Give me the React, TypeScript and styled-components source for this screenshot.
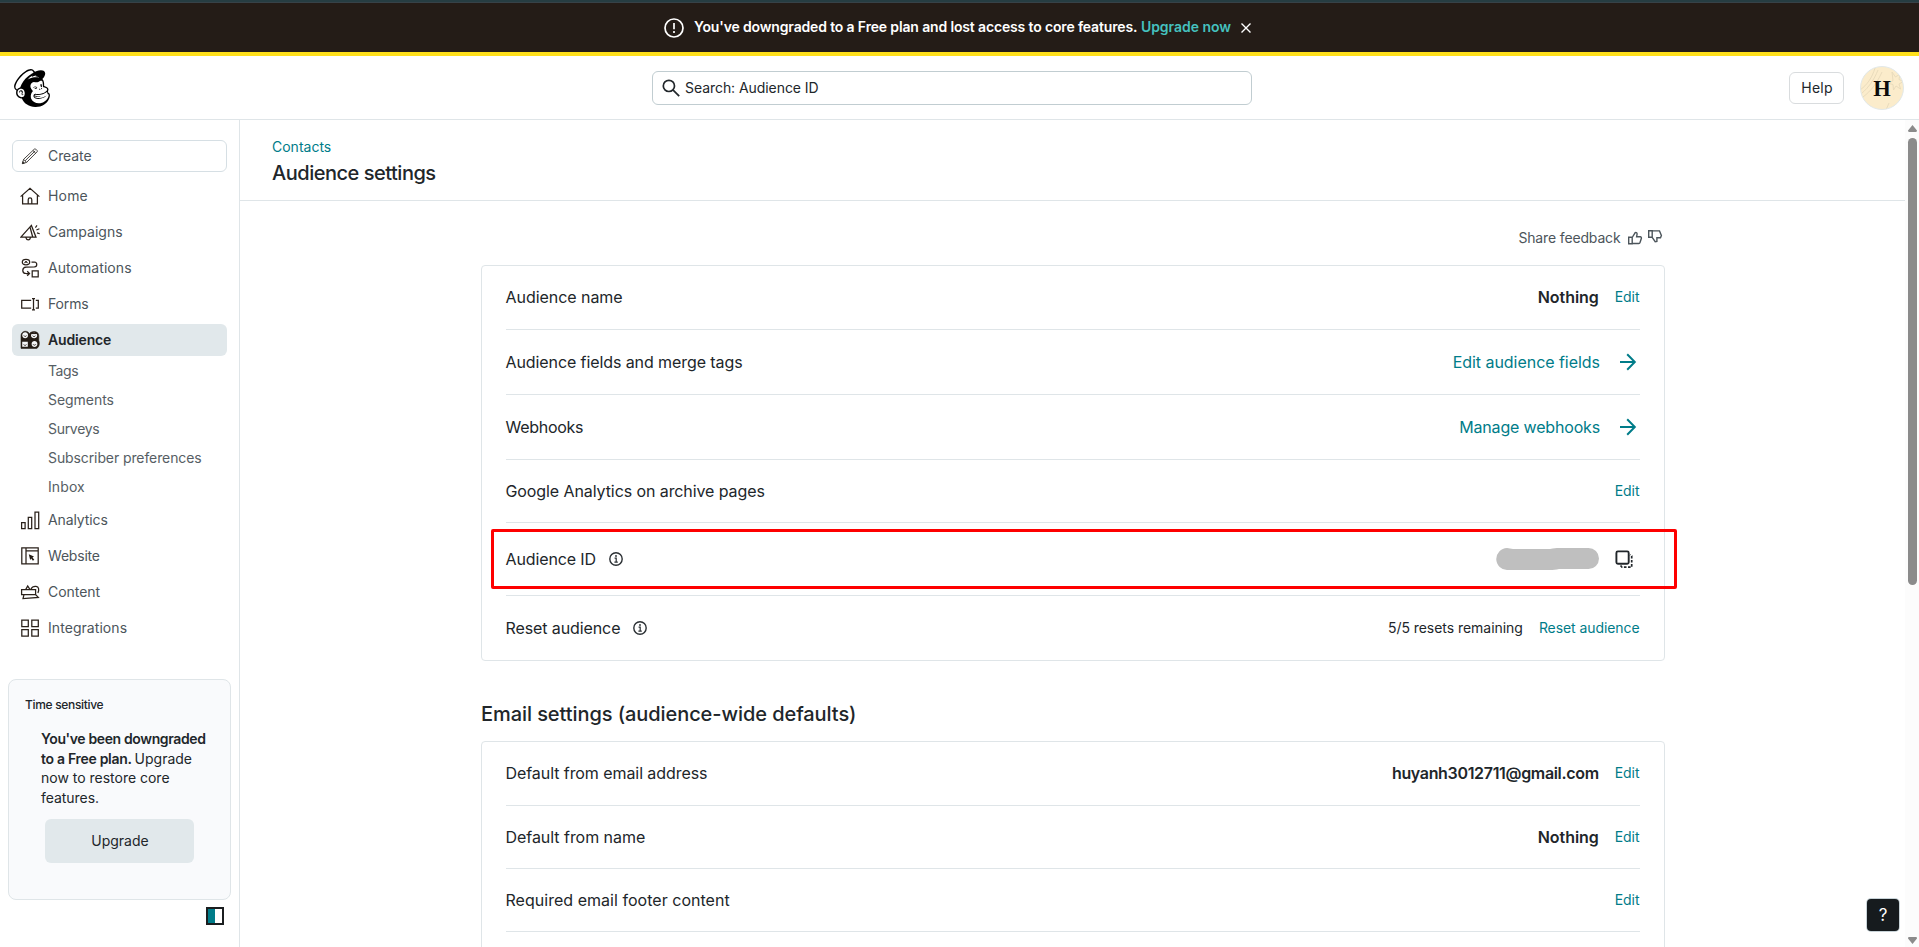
import React from "react";
import styled, { createGlobalStyle } from "styled-components";
import { SiMailchimp } from "react-icons/si";

const ink = "#21262a";
const muted = "#4c555b";
const teal = "#007c89";
const line = "#dfe5e8";

const GlobalStyle = createGlobalStyle`
  *, *::before, *::after { box-sizing: border-box; }
  html, body { margin: 0; height: 100%; overflow: hidden; }
  body {
    background: #fff;
    color: ${ink};
    font-family: Inter, "Liberation Sans", sans-serif;
    font-size: 14px;
  }
`;

const Page = styled.div`
  position: relative;
  display: flex;
  flex-direction: column;
  height: 947px;
  overflow: hidden;
`;

const Text = styled.span<{ $size?: number; $weight?: number; $ls?: number; $color?: string }>`
  font-size: ${(p) => p.$size ?? 14}px;
  font-weight: ${(p) => p.$weight ?? 400};
  letter-spacing: ${(p) => p.$ls ?? -0.05}px;
  color: ${(p) => p.$color ?? "inherit"};
  white-space: nowrap;
`;

const Link = styled(Text).attrs({ as: "a" })`
  color: ${teal};
`;

/* Top notice */
const TopStrip = styled.div`
  flex: none;
  height: 3px;
  background: #263d42;
  border-bottom: 1px solid #374248;
`;

const Notice = styled.div`
  flex: none;
  display: flex;
  align-items: center;
  height: 53px;
  padding-left: 664px;
  background: #241c17;
  border-bottom: 4px solid #ffe01b;
  color: #fff;

  > svg { flex: none; display: block; }
`;

const NoticeText = styled.div`
  display: flex;
  gap: 3.6px;
  margin: 0 10px 0 10px;
  padding-bottom: 2px;
`;

/* App header */
const Header = styled.header`
  flex: none;
  display: grid;
  grid-template-columns: 652px 600px 1fr;
  align-items: center;
  height: 64px;
  border-bottom: 1px solid ${line};
`;

const Brand = styled.div`
  display: flex;
  padding: 1px 0 0 13px;
  color: #000;
`;

const SearchBox = styled.div`
  display: flex;
  align-items: center;
  gap: 5px;
  height: 34px;
  padding-left: 9px;
  border: 1px solid #c1cdd1;
  border-radius: 6px;
`;

const Account = styled.div`
  display: flex;
  align-items: center;
  justify-content: flex-end;
  gap: 16px;
  padding-right: 15px;
`;

const HelpButton = styled.button`
  width: 55px;
  height: 32px;
  padding: 0 0 0 1px;
  border: 1px solid #d9dcde;
  border-radius: 6px;
  background: #fff;
  color: ${ink};
  font: inherit;
`;

/* Body */
const Body = styled.div`
  flex: 1;
  min-height: 0;
  display: grid;
  grid-template-columns: 240px 1fr 14px;
`;

const Sidebar = styled.aside`
  display: flex;
  flex-direction: column;
  border-right: 1px solid ${line};
  padding: 20px 8px 0 8px;
`;

const Nav = styled.nav`
  display: flex;
  flex-direction: column;
  gap: 4px;
  padding: 0 4px;
`;

const NavRow = styled.div<{ $active?: boolean; $outlined?: boolean }>`
  display: flex;
  align-items: center;
  gap: 8px;
  height: 32px;
  padding-left: ${(p) => (p.$outlined ? 7 : 8)}px;
  margin-bottom: ${(p) => (p.$outlined ? 4 : 0)}px;
  border: ${(p) => (p.$outlined ? `1px solid #d6dfe4` : "none")};
  border-radius: 6px;
  background: ${(p) => (p.$active ? "#e1e8eb" : "transparent")};
  color: ${(p) => (p.$active ? ink : muted)};

  svg { flex: none; }
  > span { padding-bottom: 1.5px; }
`;

const SubNav = styled.div`
  display: flex;
  flex-direction: column;
  margin: -4px 0 -1px;
  padding-left: 36px;
  color: #565e64;
`;

const SubItem = styled.div`
  display: flex;
  align-items: center;
  height: 29px;
  padding-bottom: 1px;
`;

const PlanCard = styled.section`
  display: flex;
  flex-direction: column;
  height: 221px;
  margin-top: 35px;
  padding: 15px 16px 0;
  border: 1px solid ${line};
  border-radius: 8px;
  background: #f9fafc;
`;

const PlanCopy = styled.p`
  display: flex;
  flex-direction: column;
  margin: 15px 0 0 16px;
  line-height: 19.5px;
`;

const CardTitle = styled.div`
  line-height: 18px;
`;

const UpgradeButton = styled.button`
  width: 149px;
  height: 44px;
  margin: 12px 0 0 20px;
  padding: 0 0 1px 1px;
  border: 0;
  border-radius: 6px;
  background: #e1e8eb;
  color: ${ink};
  font: inherit;
`;

const CollapseToggle = styled.div`
  align-self: flex-end;
  width: 18px;
  height: 18px;
  margin: 7px 7px 0 0;
  border: 2px solid #1b1e20;
  background: linear-gradient(to right, ${teal} 50%, #fff 50%);
`;

const Main = styled.main`
  display: flex;
  flex-direction: column;
  min-width: 0;
  overflow: hidden;
`;

const TitleBar = styled.div`
  flex: none;
  display: flex;
  flex-direction: column;
  height: 81px;
  padding: 17px 0 0 32px;
  border-bottom: 1px solid ${line};
  line-height: 20px;
`;

const PageTitle = styled.h1`
  margin: 2px 0 0;
  font-size: 20px;
  font-weight: 500;
  line-height: 28px;
  letter-spacing: -0.48px;
`;

const Content = styled.div`
  flex: none;
  width: 1184px;
  margin-left: 241px;
`;

const Feedback = styled.div`
  display: flex;
  align-items: center;
  justify-content: flex-end;
  height: 64px;
  padding: 9px 2px 0 0;
  color: ${muted};

  svg { margin-left: 4px; }
  svg:first-of-type { margin-left: 6.5px; }
  svg:last-of-type { margin-top: -1px; }
`;

const Panel = styled.section`
  border: 1px solid ${line};
  border-radius: 4px;
  padding: 0 24px;
`;

const Row = styled.div<{ $h: number; $lift?: boolean }>`
  position: relative;
  display: flex;
  align-items: center;
  height: ${(p) => p.$h}px;
  padding-bottom: ${(p) => (p.$lift ? 1 : 0)}px;
  border-bottom: 1px solid ${line};

  &:last-child { border-bottom: 0; }
  > span { margin-left: -0.5px; }
`;

const RowEnd = styled.div<{ $gap?: number; $inset?: number }>`
  display: flex;
  align-items: center;
  gap: ${(p) => p.$gap ?? 16}px;
  margin-left: auto;
  padding-right: ${(p) => p.$inset ?? 0}px;
`;

/* Small row text sits slightly above the label's centre line */
const RowNote = styled(Text)`
  padding-bottom: 1px;
`;

const RowLink = styled(RowNote).attrs({ as: "a" })`
  color: ${teal};
`;

const InfoIcon = styled.svg`
  margin-left: 12px;
`;

const SectionTitle = styled.h2`
  margin: 0;
  padding-top: 40px;
  height: 80px;
  font-size: 20px;
  font-weight: 500;
  line-height: 27px;
  letter-spacing: -0.07px;
`;

/* Annotation frame drawn over the Audience ID row */
const Highlight = styled.div`
  position: absolute;
  top: 6px;
  left: -15px;
  right: -37px;
  height: 60px;
  border: 3px solid #fe0000;
  border-radius: 2px;
  pointer-events: none;
`;

const Scrollbar = styled.div`
  display: flex;
  flex-direction: column;
  align-items: center;
  padding: 5px 0 3px 0;
  background: #fcfcfc;

  svg { display: block; }
`;

const Thumb = styled.div`
  width: 9px;
  height: 447px;
  margin: 6px 0 auto;
  border-radius: 5px;
  background: #8b8b8b;
`;

const HelpBubble = styled.button`
  position: absolute;
  right: 20px;
  bottom: 16px;
  width: 32px;
  height: 32px;
  padding: 0;
  border: 0;
  border-radius: 4px;
  background: #161b1e;
  box-shadow: 0 0 0 1px #c8d3d8;
  color: #fff;
  font: 400 17px Inter, sans-serif;
`;

const Glyph = styled.svg.attrs({
  width: 20,
  height: 20,
  viewBox: "0 0 20 20",
  fill: "none",
  stroke: "#2a211a",
  strokeWidth: 1.25,
})`
  display: block;
`;

const icons: Record<string, React.ReactNode> = {
  Create: (
    <Glyph>
      <g strokeWidth=".9" stroke="#33302d">
        <path d="M2.500 17.500l1.100-4.200L14.400 3.100c.4-.4.900-.4 1.300 0l1.400 1.400c.4.4.4.900 0 1.300L6.600 16.400z" />
        <path d="M3.600 13.300l3 3.100M5.100 14.800L15.200 4.900M12.900 4.500l2.900 2.900" />
        <path d="M2.300 17.700l.5-2 1.500 1.500z" fill="#33302d" />
      </g>
    </Glyph>
  ),
  Home: (
    <Glyph>
      <path d="M.6 10.600L10 2.300l9.400 8.300M2.600 9v8.900h14.800V9M8.200 18v-4.300c0-2.400 3.600-2.400 3.600 0V18" />
    </Glyph>
  ),
  Campaigns: (
    <Glyph>
      <path d="M.9 15.200L11.400 3.400l4.600 11.800zM10 5l2.700 10M5.900 15.600c.6 2.900 4.100 2.900 4.600 0" />
      <path d="M15.400 5.600l1.600-2.200M16.400 8l3-1.200M17 10.900l2.700.8" strokeWidth="1.150" />
    </Glyph>
  ),
  Automations: (
    <Glyph>
      <ellipse cx="6" cy="4.100" rx="3.700" ry="2.800" />
      <path d="M4.500 5.200c.4-2 2.600-2 3 0" strokeWidth="1" />
      <circle cx="6" cy="3.900" r=".9" fill="#2a211a" stroke="none" />
      <path d="M11.500 4h3c3 .3 3 4.600 0 4.900l-8.500.3c-4.300.4-4.300 6 0 6.300h3M7.200 13.300l2.300 2.200-2.300 2.200" />
      <path d="M12.200 12.800h6v6.100h-6z" />
    </Glyph>
  ),
  Forms: (
    <Glyph>
      <path d="M11.200 6.300H1.700v7.800h9.500M15.800 6.300h2.500v7.800h-2.500M13.500 5v11M12 4.600h3M12 15.900h3" />
    </Glyph>
  ),
  Audience: (
    <Glyph>
      <path d="M1 6C1-.2 9 .2 9.300 4.300 9.800 1 18.800-.2 18.800 6v4.600c1 1.800.8 6.200-2 7.800H1z" fill="#241c15" strokeWidth=".6" />
      <g fill="#f4f6f7" stroke="none">
        <path d="M2.200 5.300c0-4 5.900-4 5.900 0s-5.900 4-5.900 0zM11 5.600c0-3.700 6.200-3.700 6.200 0s-6.200 3.400-6.200 0z" />
        <path d="M2.200 11.800h5.600v5H2.200zM11.600 14c0-4 5.800-4 5.800 0s-5.800 4-5.800 0z" />
      </g>
      <path d="M3.800 5.500c.7 1.200 2.200 1.200 2.900 0M12.700 5.700c.7 1.200 2 1.200 2.700 0M3.700 14.500c.7 1.200 2 1.200 2.700 0M13.100 14.300c.7 1.200 2 1.200 2.700 0" strokeWidth=".9" />
      <path d="M10.400 3.500h7.600" strokeWidth="1.100" />
    </Glyph>
  ),
  Analytics: (
    <Glyph>
      <path d="M1.600 12.600h3.500v6.100H1.600zM8.300 7.400h3.400v11.300H8.300zM15 2.200h3.700v16.500H15z" />
    </Glyph>
  ),
  Website: (
    <Glyph>
      <path d="M1.800 1.900h16.400v16H1.800zM6 2v16M6 4.900h12" />
      <path d="M8.800 8.300l5.200 2.200-1.500 1 1.800 2.200-1.400 1.100-1.700-2.300-1 1.500z" fill="#241c15" stroke="none" />
    </Glyph>
  ),
  Content: (
    <Glyph>
      <path d="M1.600 7.600h14v5H1.600zM4 12.700L3 16.600l15.300-1.200-2.600-2.600" />
      <path d="M5.800 7.400L7.700 4l2.200 3.400M11 7c1.200-2.500 3-2.800 5-2.600 3 .4 3.300 3.400 1.900 6.600" />
    </Glyph>
  ),
  Integrations: (
    <Glyph>
      <path d="M1.800 2.200h6.500v6.500H1.800zM11.800 2.200h6.500v6.500h-6.500zM1.800 11.700h6.500v6.400H1.800zM11.800 11.700h6.500v6.400h-6.500z" />
    </Glyph>
  ),
};

const navTop: [string, number][] = [
  ["Home", 0.18],
  ["Campaigns", 0],
  ["Automations", 0.06],
  ["Forms", -0.14],
];
const subItems: [string, number][] = [
  ["Tags", -0.4],
  ["Segments", -0.05],
  ["Surveys", -0.3],
  ["Subscriber preferences", -0.1],
  ["Inbox", 0.1],
];
const navBottom: [string, number][] = [
  ["Analytics", -0.1],
  ["Website", -0.2],
  ["Content", -0.04],
  ["Integrations", 0.06],
];

const NavItem = ({ label, ls, active, outlined }: { label: string; ls: number; active?: boolean; outlined?: boolean }) => (
  <NavRow $active={active} $outlined={outlined}>
    {icons[label]}
    <Text $ls={ls} $weight={active ? 600 : 400}>{label}</Text>
  </NavRow>
);

const Info = () => (
  <InfoIcon width="16" height="16" viewBox="0 0 16 16" fill="none" stroke="#2b3034" strokeWidth="1.400">
    <circle cx="8" cy="8" r="6.200" />
    <path d="M6.600 7.200H8.200V11M6.400 11.100h3.400" strokeWidth="1.200" />
    <circle cx="8" cy="5" r=".9" fill="#2b3034" stroke="none" />
  </InfoIcon>
);

const Arrow = () => (
  <svg width="24" height="24" viewBox="0 0 24 24" fill="none" stroke={teal} strokeWidth="2">
    <path d="M4 12h15M11.200 4.300l7.600 7.700-7.600 7.700" />
  </svg>
);

const ThumbIcon = ({ down }: { down?: boolean }) => (
  <svg width="16" height="16" viewBox="0 0 16 16" fill="none" stroke={muted} strokeWidth="1.400">
    {down ? (
      <path d="M1.700 1.700h3.500v6.600H1.700zM5.200 1.900h7.300l1.900 4.600-.9 2.300H9.900v3.600l-1.700.3-3-4.400" />
    ) : (
      <path d="M1.700 7.200h3.500v6.500H1.700zM5.200 7.500l3-4.900c1.300-.4 1.900.4 1.900 1.400l-.5 2.800h3.700c.9 0 1.200.8 1.100 1.500l-1.300 4c-.2.800-.6 1.200-1.300 1.200H5.200" />
    )}
  </svg>
);

const CopyIcon = () => (
  <svg width="24" height="24" viewBox="0 0 24 24" fill="none" stroke="#21262a" strokeWidth="1.900">
    <rect x="4.400" y="4.400" width="12.300" height="12.300" rx="1.500" />
    <path d="M8.500 18.500l1.500 1.600h9.700V9L18 7.800" strokeDasharray="2.600 1.500" strokeWidth="1.700" />
  </svg>
);

const RedactedId = () => (
  <svg width="103" height="22" viewBox="0 0 103 22">
    <path d="M11 0c2 0 4 .9 6 .9h37C58 .5 60 0 63 0h29.500a10.500 10.500 0 0 1 0 21H63c-3 .8-6 1-9 1H11.500A11 11 0 0 1 11 0z" fill="#bfbfbf" />
  </svg>
);

const Avatar = () => (
  <svg width="44" height="44" viewBox="0 0 44 44">
    <defs>
      <clipPath id="avatar-disc"><circle cx="22" cy="22" r="21.500" /></clipPath>
    </defs>
    <circle cx="22" cy="22" r="21.500" fill="#fbeccb" />
    <g clipPath="url(#avatar-disc)" fill="none" stroke="#e6d9ba" strokeWidth=".9">
      <path d="M0 24C7 19 12 12 15 2M1 28C9 21 14 14 18 4M3 31c8-6 14-14 19-25" />
      <path d="M32 6l3.500 5 4.500-3-1 5.500 4.500 2-4.500 2.500 1.500 5-4.500-3-2.500 4-.5-5.500-4-1 4-3zM29 37l-3 7" />
    </g>
    <circle cx="22" cy="22" r="21.500" fill="none" stroke="#e2e8e8" />
    <text x="22" y="29.500" textAnchor="middle" fontFamily="Liberation Serif, serif" fontWeight="700" fontSize="22.500" fill="#0c0c0c">H</text>
  </svg>
);

export default function App() {
  return (
    <Page>
      <GlobalStyle />
      <TopStrip />
      <Notice>
        <svg width="20" height="20" viewBox="0 0 20 20" fill="none" stroke="#fff" strokeWidth="1.700">
          <circle cx="10" cy="10" r="9" />
          <path d="M10 5v6.200M10 13v2" />
        </svg>
        <NoticeText>
          <Text $weight={600} $ls={-0.15}>You've downgraded to a Free plan and lost access to core features.</Text>
          <Text $weight={600} $ls={-0.03} $color="#45c1bf">Upgrade now</Text>
        </NoticeText>
        <svg width="10" height="10" viewBox="0 0 10 10" stroke="#fff" strokeWidth="1.400">
          <path d="M.5.5l9 9M9.500.5l-9 9" />
        </svg>
      </Notice>

      <Header>
        <Brand><SiMailchimp size={38} /></Brand>
        <SearchBox>
          <svg width="18" height="18" viewBox="0 0 18 18" fill="none" stroke="#21262a" strokeWidth="1.700">
            <circle cx="6.900" cy="6.900" r="5.600" />
            <path d="M10.900 10.900l6.300 6.200" />
          </svg>
          <Text $ls={-0.06}>Search: Audience ID</Text>
        </SearchBox>
        <Account>
          <HelpButton><Text $ls={0.25}>Help</Text></HelpButton>
          <Avatar />
        </Account>
      </Header>

      <Body>
        <Sidebar>
          <Nav>
            <NavItem label="Create" ls={-0.09} outlined />
            {navTop.map(([label, ls]) => <NavItem key={label} label={label} ls={ls} />)}
            <NavItem label="Audience" ls={-0.15} active />
            <SubNav>
              {subItems.map(([label, ls]) => (
                <SubItem key={label}><Text $ls={ls}>{label}</Text></SubItem>
              ))}
            </SubNav>
            {navBottom.map(([label, ls]) => <NavItem key={label} label={label} ls={ls} />)}
          </Nav>
          <PlanCard>
            <CardTitle><Text $size={12} $weight={500} $ls={-0.32}>Time sensitive</Text></CardTitle>
            <PlanCopy>
              <Text $weight={600} $ls={-0.37}>You've been downgraded</Text>
              <span>
                <Text $weight={600} $ls={-0.3}>to a Free plan. </Text>
                <Text $ls={0}>Upgrade</Text>
              </span>
              <Text $ls={-0.01}>now to restore core</Text>
              <Text>features.</Text>
            </PlanCopy>
            <UpgradeButton><Text $ls={0}>Upgrade</Text></UpgradeButton>
          </PlanCard>
          <CollapseToggle />
        </Sidebar>

        <Main>
          <TitleBar>
            <Link $ls={0}>Contacts</Link>
            <PageTitle>Audience settings</PageTitle>
          </TitleBar>
          <Content>
            <Feedback>
              <Text $ls={-0.15}>Share feedback</Text>
              <ThumbIcon />
              <ThumbIcon down />
            </Feedback>
            <Panel>
              <Row $h={64} $lift>
                <Text $size={16}>Audience name</Text>
                <RowEnd $inset={0.5}>
                  <Text $size={16} $weight={600}>Nothing</Text>
                  <RowLink>Edit</RowLink>
                </RowEnd>
              </Row>
              <Row $h={65}>
                <Text $size={16} $ls={-0.09}>Audience fields and merge tags</Text>
                <RowEnd>
                  <Link $size={16} $ls={-0.04}>Edit audience fields</Link>
                  <Arrow />
                </RowEnd>
              </Row>
              <Row $h={65}>
                <Text $size={16} $ls={-0.27}>Webhooks</Text>
                <RowEnd>
                  <Link $size={16} $ls={-0.17}>Manage webhooks</Link>
                  <Arrow />
                </RowEnd>
              </Row>
              <Row $h={63}>
                <Text $size={16} $ls={-0.09}>Google Analytics on archive pages</Text>
                <RowEnd $inset={0.5}><RowLink>Edit</RowLink></RowEnd>
              </Row>
              <Row $h={73}>
                <Text $size={16} $ls={-0.12}>Audience ID</Text>
                <Info />
                <RowEnd $gap={13} $inset={4}>
                  <RedactedId />
                  <CopyIcon />
                </RowEnd>
                <Highlight />
              </Row>
              <Row $h={64}>
                <Text $size={16} $ls={-0.1}>Reset audience</Text>
                <Info />
                <RowEnd $inset={0.5}>
                  <RowNote $ls={-0.04}>5/5 resets remaining</RowNote>
                  <RowLink $ls={-0.08}>Reset audience</RowLink>
                </RowEnd>
              </Row>
            </Panel>

            <SectionTitle>Email settings (audience-wide defaults)</SectionTitle>
            <Panel>
              <Row $h={64} $lift>
                <Text $size={16} $ls={-0.07}>Default from email address</Text>
                <RowEnd $inset={0.5}>
                  <Text $size={16} $weight={600} $ls={-0.33}>huyanh3012711@gmail.com</Text>
                  <RowLink>Edit</RowLink>
                </RowEnd>
              </Row>
              <Row $h={63}>
                <Text $size={16} $ls={-0.04}>Default from name</Text>
                <RowEnd $inset={0.5}>
                  <Text $size={16} $weight={600}>Nothing</Text>
                  <RowLink>Edit</RowLink>
                </RowEnd>
              </Row>
              <Row $h={63}>
                <Text $size={16} $ls={0.03}>Required email footer content</Text>
                <RowEnd $inset={0.5}><RowLink>Edit</RowLink></RowEnd>
              </Row>
              <Row $h={65} />
            </Panel>
          </Content>
        </Main>

        <Scrollbar>
          <svg width="9" height="7" viewBox="0 0 9 7"><path d="M4.500 0L9 5.600Q9 7 8 7H1Q0 7 0 5.600z" fill="#8b8b8b" /></svg>
          <Thumb />
          <svg width="9" height="7" viewBox="0 0 9 7"><path d="M4.500 7L9 1.400Q9 0 8 0H1Q0 0 0 1.400z" fill="#8b8b8b" /></svg>
        </Scrollbar>
      </Body>
      <HelpBubble>?</HelpBubble>
    </Page>
  );
}
